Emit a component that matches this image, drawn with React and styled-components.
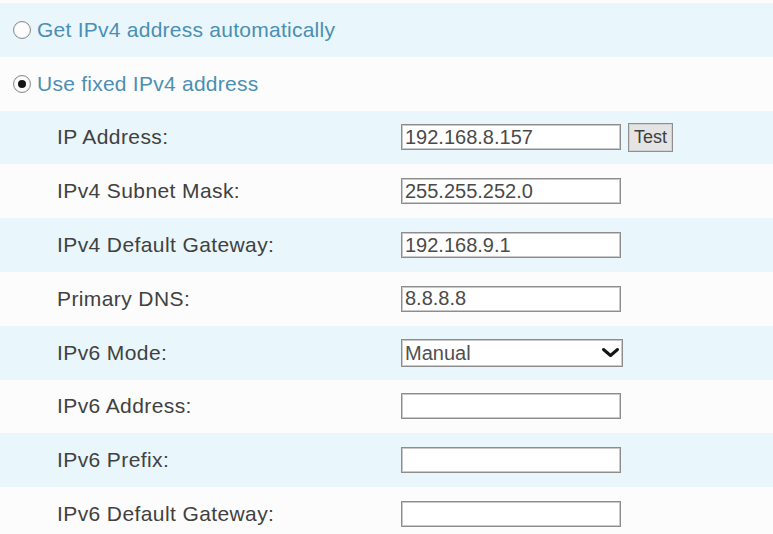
import React from "react";
import styled, { createGlobalStyle } from "styled-components";

const GlobalStyle = createGlobalStyle`
  html, body {
    margin: 0;
    padding: 0;
    background: #fcfcfc;
  }
  body {
    font-family: "Liberation Sans", Arial, sans-serif;
  }
`;

const Page = styled.div`
  width: 773px;
  height: 534px;
  padding-top: 3px;
  box-sizing: border-box;
  overflow: hidden;
  background: #fcfcfc;
`;

const Row = styled.div`
  height: 53.8px;
  display: flex;
  align-items: center;
  background: ${(p) => (p.$shade ? "#e9f6fb" : "#fcfcfc")};
`;

const RadioRow = styled(Row)`
  padding-left: 13px;
  gap: 6px;
`;

const FieldRow = styled(Row)`
  display: grid;
  grid-template-columns: 344px 1fr;
  align-items: center;
  padding-left: 57px;
`;

const RadioCircle = styled.span`
  width: 18px;
  height: 18px;
  box-sizing: border-box;
  border-radius: 50%;
  border: 1.5px solid #8c8c8c;
  background: #fdfdfd;
  display: flex;
  align-items: center;
  justify-content: center;
  box-shadow: inset 0 0 1px rgba(0, 0, 0, 0.25);
`;

const RadioDot = styled.span`
  width: 8px;
  height: 8px;
  border-radius: 50%;
  background: #151515;
`;

const RadioLabel = styled.span`
  font-size: 21px;
  color: #4b8fb3;
  letter-spacing: 0.25px;
`;

const Label = styled.span`
  font-size: 21px;
  color: #414141;
  letter-spacing: 0.4px;
`;

const Controls = styled.div`
  display: flex;
  align-items: center;
  gap: 7px;
`;

const TextInput = styled.input`
  width: 220px;
  height: 26px;
  box-sizing: border-box;
  border: 1px solid #8d8d8d;
  box-shadow: inset 0 0 0 1px #c9c9c9;
  background: #fff;
  padding: 0 3px;
  margin: 0;
  font-family: "Liberation Sans", Arial, sans-serif;
  font-size: 20px;
  color: #4a4a4a;
  outline: none;
`;

const TestButton = styled.button`
  width: 45px;
  height: 29px;
  box-sizing: border-box;
  border: 1px solid #8f8f8f;
  box-shadow: inset 0 0 0 1px #d2d2d2;
  background: #e4e4e4;
  padding: 0;
  margin: 0;
  font-family: "Liberation Sans", Arial, sans-serif;
  font-size: 18px;
  color: #3e3e3e;
`;

const SelectWrap = styled.div`
  position: relative;
  width: 222px;
  height: 28px;
`;

const SelectBox = styled.select`
  appearance: none;
  -webkit-appearance: none;
  width: 100%;
  height: 100%;
  box-sizing: border-box;
  border: 1px solid #8d8d8d;
  box-shadow: inset 0 0 0 1px #c9c9c9;
  border-radius: 0;
  background: #fff;
  padding: 0 3px;
  margin: 0;
  font-family: "Liberation Sans", Arial, sans-serif;
  font-size: 20px;
  color: #505050;
  outline: none;
`;

const Chevron = styled.svg`
  position: absolute;
  right: 3px;
  top: 8px;
  pointer-events: none;
`;

const fields = [
  { label: "IP Address:", value: "192.168.8.157", test: true },
  { label: "IPv4 Subnet Mask:", value: "255.255.252.0" },
  { label: "IPv4 Default Gateway:", value: "192.168.9.1" },
  { label: "Primary DNS:", value: "8.8.8.8" },
  { label: "IPv6 Mode:", select: "Manual" },
  { label: "IPv6 Address:", value: "" },
  { label: "IPv6 Prefix:", value: "" },
  { label: "IPv6 Default Gateway:", value: "" },
];

export default function App() {
  return (
    <>
      <GlobalStyle />
      <Page>
        <RadioRow $shade>
          <RadioCircle />
          <RadioLabel>Get IPv4 address automatically</RadioLabel>
        </RadioRow>
        <RadioRow>
          <RadioCircle>
            <RadioDot />
          </RadioCircle>
          <RadioLabel>Use fixed IPv4 address</RadioLabel>
        </RadioRow>
        {fields.map((f, i) => (
          <FieldRow key={f.label} $shade={i % 2 === 0}>
            <Label>{f.label}</Label>
            <Controls>
              {f.select ? (
                <SelectWrap>
                  <SelectBox defaultValue={f.select}>
                    <option>{f.select}</option>
                  </SelectBox>
                  <Chevron width="19" height="11" viewBox="0 0 19 11">
                    <polyline
                      points="2.5,2.5 9.5,8.5 16.5,2.5"
                      fill="none"
                      stroke="#151515"
                      strokeWidth="3"
                      strokeLinecap="round"
                      strokeLinejoin="round"
                    />
                  </Chevron>
                </SelectWrap>
              ) : (
                <TextInput readOnly defaultValue={f.value} />
              )}
              {f.test && <TestButton>Test</TestButton>}
            </Controls>
          </FieldRow>
        ))}
      </Page>
    </>
  );
}
